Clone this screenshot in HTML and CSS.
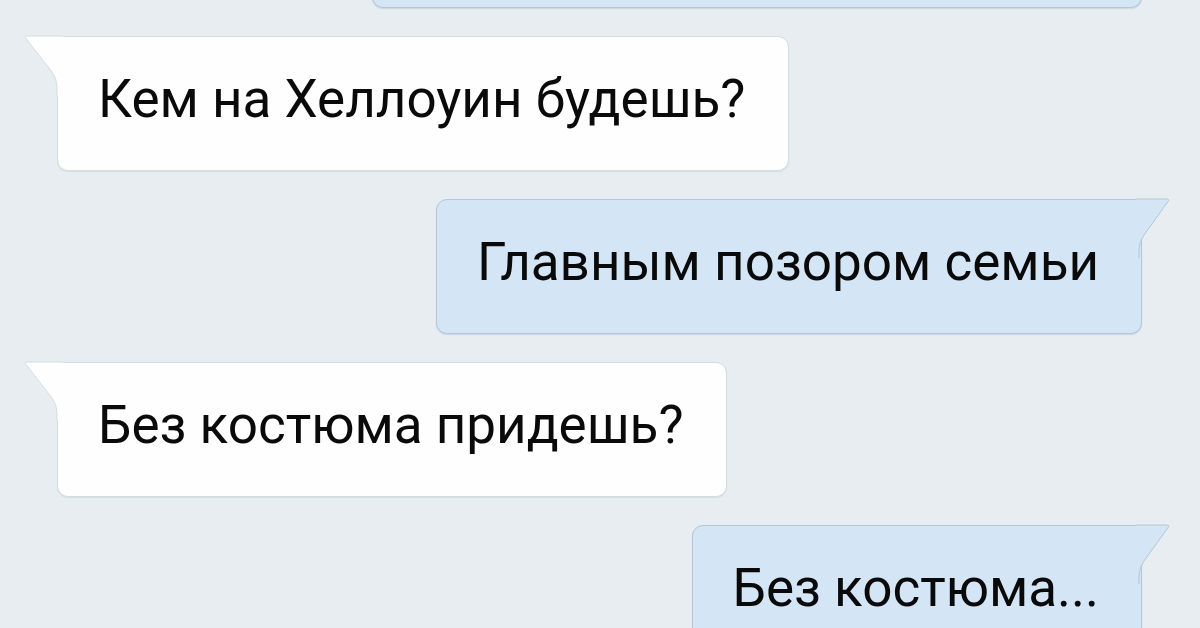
FILE: index.html
```html
<!DOCTYPE html>
<html lang="ru">
<head>
  <meta charset="UTF-8" />
  <meta name="viewport" content="width=device-width, initial-scale=1.0"/>
  <title>Диалог</title>
  <link rel="stylesheet" href="styles.css">
</head>
<body>
  <div class="chat">
    <div class="msg out cut">&nbsp;</div>

    <div class="msg in">
      <svg class="tail" width="40" height="60" viewBox="0 0 40 60">
        <path class="fill" d="M40 1 L4 1 Q1 1 3 3.5 L29 37 Q34 44 34 52 L34 60 L40 60 Z"/>
        <path class="line" d="M40 1 L4 1 Q1 1 3 3.5 L29 37 Q34 44 34 52 L34 60"/>
      </svg>
      Кем на Хеллоуин будешь?
    </div>

    <div class="msg out">
      <svg class="tail" width="40" height="60" viewBox="0 0 40 60">
        <path class="fill" d="M0 1 L30 1 Q34 1 32 3.5 L8 37 Q3 44 3 52 L3 60 L0 60 Z"/>
        <path class="line" d="M0 1 L30 1 Q34 1 32 3.5 L8 37 Q3 44 3 52 L3 60"/>
      </svg>
      Главным позором семьи
    </div>

    <div class="msg in">
      <svg class="tail" width="40" height="60" viewBox="0 0 40 60">
        <path class="fill" d="M40 1 L4 1 Q1 1 3 3.5 L29 37 Q34 44 34 52 L34 60 L40 60 Z"/>
        <path class="line" d="M40 1 L4 1 Q1 1 3 3.5 L29 37 Q34 44 34 52 L34 60"/>
      </svg>
      Без костюма придешь?
    </div>

    <div class="msg out">
      <svg class="tail" width="40" height="60" viewBox="0 0 40 60">
        <path class="fill" d="M0 1 L30 1 Q34 1 32 3.5 L8 37 Q3 44 3 52 L3 60 L0 60 Z"/>
        <path class="line" d="M0 1 L30 1 Q34 1 32 3.5 L8 37 Q3 44 3 52 L3 60"/>
      </svg>
      Без костюма...
    </div>
  </div>
</body>
</html>
```

FILE: styles.css
```css
body {
  margin: 0;
  background: #e7edf0;
  font-family: Roboto, 'Noto Sans', sans-serif;
  color: #0a0a0a;
  height: 100vh;
  overflow: hidden;
}
.chat {
  display: flex;
  flex-direction: column;
  align-items: flex-start;
  gap: 28px;
  margin-top: -127px;
}
.msg {
  position: relative;
  box-sizing: border-box;
  height: 135px;
  padding: 31px 43px 0 40px;
  font-size: 53px;
  line-height: 62px;
  white-space: nowrap;
  border: 1px solid;
  border-radius: 11px;
}
.msg.in {
  margin-left: 57px;
  background: #fefefe;
  border-color: #d4dde2;
  border-top-left-radius: 0;
  box-shadow: 0 1px 1px rgba(120, 140, 155, 0.15);
}
.msg.out {
  align-self: flex-end;
  margin-right: 58px;
  padding: 31px 42px 0 40px;
  background: #d4e5f6;
  border-color: #b5c6d8;
  border-top-right-radius: 0;
  box-shadow: 0 1px 1px rgba(100, 130, 160, 0.2);
}
.msg.cut {
  width: 770px;
}
.tail {
  position: absolute;
  top: -2px;
}
.msg.in .tail {
  left: -35px;
}
.msg.out .tail {
  right: -35px;
}
.msg.cut .tail {
  display: none;
}
.tail .line {
  fill: none;
  stroke-width: 1;
}
.msg.in .tail .fill {
  fill: #fefefe;
}
.msg.in .tail .line {
  stroke: #d4dde2;
}
.msg.out .tail .fill {
  fill: #d4e5f6;
}
.msg.out .tail .line {
  stroke: #b5c6d8;
}
```
